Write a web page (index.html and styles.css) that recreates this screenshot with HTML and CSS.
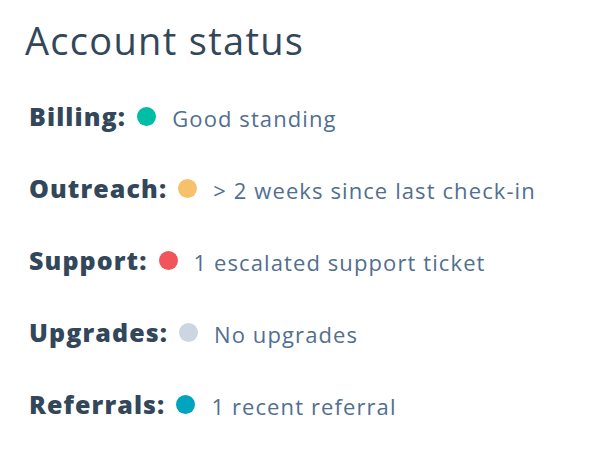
FILE: index.html
```html
<!DOCTYPE html>
<html>
<head>
<meta charset="utf-8">
<link rel="stylesheet" href="styles.css">
</head>
<body>
<div class="card">
  <h1 class="title">Account status</h1>
  <ul class="list">
    <li class="row"><span class="label">Billing:</span><span class="dot green"></span><span class="value">Good standing</span></li>
    <li class="row"><span class="label">Outreach:</span><span class="dot yellow"></span><span class="value">&gt; 2 weeks since last check-in</span></li>
    <li class="row"><span class="label">Support:</span><span class="dot red"></span><span class="value">1 escalated support ticket</span></li>
    <li class="row"><span class="label">Upgrades:</span><span class="dot gray"></span><span class="value">No upgrades</span></li>
    <li class="row"><span class="label">Referrals:</span><span class="dot teal"></span><span class="value">1 recent referral</span></li>
  </ul>
</div>
</body>
</html>
```
FILE: styles.css
```css
html, body {
  margin: 0;
  padding: 0;
  background: #ffffff;
}
body {
  font-family: "Open Sans", "Lato", sans-serif;
  color: #33475b;
}
.card {
  padding: 17px 0 0 25px;
}
.title {
  margin: 0;
  font-size: 38px;
  font-weight: 400;
  letter-spacing: 1.3px;
  line-height: 46px;
  color: #33475b;
}
.list {
  list-style: none;
  margin: 38px 0 0 0;
  padding: 0 0 0 4px;
  display: flex;
  flex-direction: column;
  gap: 42px;
}
.row {
  display: flex;
  align-items: center;
  height: 30px;
}
.label {
  font-size: 25px;
  font-weight: 800;
  letter-spacing: 1.1px;
  color: #33475b;
}
.dot {
  width: 19px;
  height: 19px;
  border-radius: 50%;
  margin: 0 16px 0 11px;
  flex: none;
}
.green { background: #00bda5; }
.yellow { background: #f5c26b; }
.red { background: #f2545b; }
.gray { background: #cbd6e2; }
.teal { background: #00a4bd; }
.value {
  font-size: 22px;
  letter-spacing: 1.1px;
  color: #516f90;
  margin-top: 4px;
}
```
